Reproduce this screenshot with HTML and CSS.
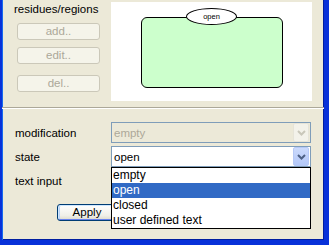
FILE: index.html
```html
<!DOCTYPE html>
<html>
<head>
<meta charset="utf-8">
<link rel="stylesheet" href="styles.css">
</head>
<body>
<div class="window">
  <div class="top">
    <div class="side">
      <div class="title">residues/regions</div>
      <button class="btn add" disabled>add..</button>
      <button class="btn edit" disabled>edit..</button>
      <button class="btn del" disabled>del..</button>
    </div>
    <div class="preview">
      <div class="region">
        <div class="tag">open</div>
      </div>
    </div>
  </div>
  <div class="sep"></div>
  <div class="form">
    <span class="label">modification</span>
    <div class="combo disabled">
      <span class="value">empty</span>
      <span class="arrow"><svg width="9" height="6" viewBox="0 0 9 6"><polyline points="1,1 4.5,4.5 8,1" fill="none" stroke="#c9c7ba" stroke-width="2"/></svg></span>
    </div>
    <span class="label">state</span>
    <div class="combo open">
      <span class="value">open</span>
      <span class="arrow"><svg width="9" height="6" viewBox="0 0 9 6"><polyline points="1,1 4.5,4.5 8,1" fill="none" stroke="#4d6185" stroke-width="2"/></svg></span>
      <ul class="list">
        <li>empty</li>
        <li class="sel">open</li>
        <li>closed</li>
        <li>user defined text</li>
      </ul>
    </div>
    <span class="label">text input</span>
    <div class="field"></div>
    <div class="actions">
      <button class="apply">Apply</button>
    </div>
  </div>
</div>
</body>
</html>
```
FILE: styles.css
```css
* { box-sizing: border-box; }
html, body { margin: 0; padding: 0; }
body {
  width: 329px;
  height: 245px;
  overflow: hidden;
  font-family: "Liberation Sans", Arial, sans-serif;
  font-size: 11.5px;
  color: #000;
}
.window {
  width: 329px;
  height: 245px;
  background: #ece9d8;
  border-left: 2px solid #0831d9;
  border-right: 5px solid #0831d9;
  border-bottom: 5px solid #0831d9;
  box-shadow: inset 1px 0 0 #166aee, inset -1px -1px 0 #001ea0;
  display: flex;
  flex-direction: column;
}
.top {
  height: 107px;
  display: flex;
}
.side {
  width: 109px;
  display: flex;
  flex-direction: column;
  align-items: flex-start;
}
.title {
  margin: 3px 0 0 12px;
  line-height: 13px;
}
.btn {
  font: inherit;
  width: 83px;
  height: 17px;
  margin-left: 15px;
  padding: 0;
  border: 1px solid #cbc8b9;
  border-radius: 3px;
  background: #f5f4ea;
  color: #aca899;
  line-height: 15px;
}
.add { margin-top: 7px; }
.edit { margin-top: 7px; }
.del { margin-top: 11px; }
.preview {
  margin-top: 2px;
  width: 201px;
  height: 99px;
  background: #fff;
  padding: 15px 0 0 30px;
}
.region {
  position: relative;
  width: 142px;
  height: 71px;
  border: 1px solid #000;
  border-radius: 6px;
  background: #ccffcc;
}
.tag {
  position: absolute;
  left: 44px;
  top: -10px;
  width: 51px;
  height: 17px;
  border: 1px solid #000;
  border-radius: 50%;
  background: #fff;
  font-size: 7.5px;
  line-height: 15px;
  text-align: center;
}
.sep {
  height: 2px;
  border-top: 1px solid #aca899;
  border-bottom: 1px solid #fff;
}
.form {
  padding: 13px 0 0 13px;
  display: grid;
  grid-template-columns: 96px 200px;
  grid-auto-rows: 21px;
  row-gap: 3px;
  align-items: center;
}
.label {
  line-height: 14px;
}
.combo {
  position: relative;
  height: 21px;
  border: 1px solid #7f9db9;
  background: #fff;
  display: flex;
  align-items: center;
  justify-content: space-between;
  padding: 0 1px 0 2px;
}
.combo.disabled {
  background: #ece9d8;
  color: #aca899;
}
.value {
  font-size: 11.5px;
}
.arrow {
  width: 16px;
  height: 19px;
  border-radius: 2px;
  display: flex;
  align-items: center;
  justify-content: center;
  background: linear-gradient(#cbdafc, #b4c8f8);
  border: 1px solid #b6c9f6;
}
.disabled .arrow {
  background: #f3f2ea;
  border: 1px solid #e6e4d8;
}
.field {
  height: 21px;
  border: 1px solid #7f9db9;
  background: #fff;
}
.list {
  position: absolute;
  left: -1px;
  top: 20px;
  width: 200px;
  margin: 0;
  padding: 0;
  list-style: none;
  border: 1px solid #000;
  background: #fff;
  color: #000;
  z-index: 2;
}
.list li {
  height: 15px;
  line-height: 15px;
  padding-left: 1px;
  font-size: 12px;
}
.list li.sel {
  background: #316ac5;
  color: #fff;
}
.actions {
  grid-column: 1 / 3;
  padding-left: 42px;
  margin-top: 15px;
}
.apply {
  font: inherit;
  width: 60px;
  height: 17px;
  padding: 0;
  border: 1px solid #003c74;
  border-radius: 3px;
  background: linear-gradient(#ffffff, #f0efe8 70%, #dcd9cc);
  box-shadow: inset 1px 1px 0 #cee7ff, inset -1px -1px 0 #6982ee, inset 2px 0 0 #bcd4f6, inset -2px 0 0 #89adeb;
  color: #000;
  line-height: 15px;
}
```
